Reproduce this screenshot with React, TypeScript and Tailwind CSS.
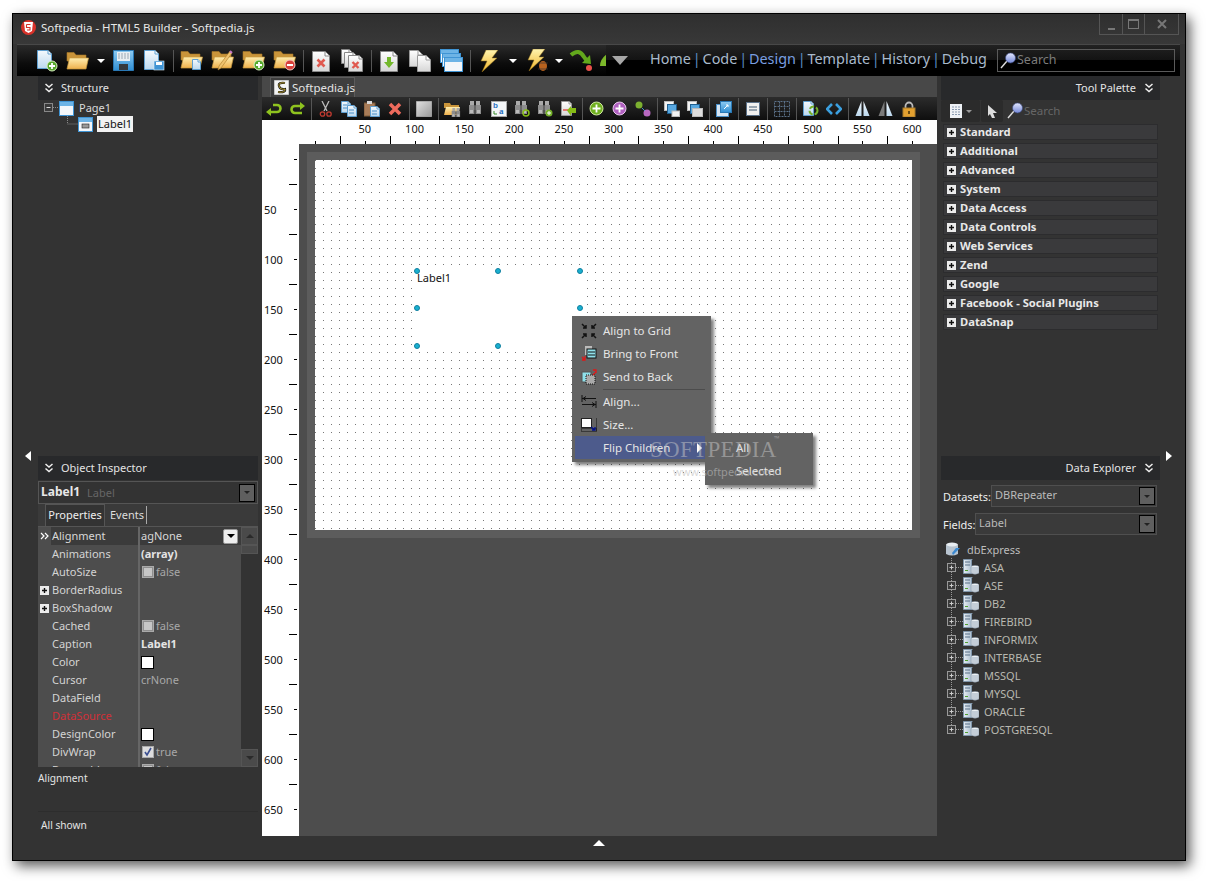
import React from "react";

const S = ({ w = 16, h = 16, children }: { w?: number; h?: number; children: React.ReactNode }) => (
  <svg width={w} height={h} viewBox={`0 0 ${w} ${h}`} className="block shrink-0">
    {children}
  </svg>
);

const Page = ({ x = 0, y = 0, w = 14, h = 18, f = 4, fill = "url(#pg)", stroke = "#5f9fd0" }: any) => (
  <g>
    <path d={`M${x + .5} ${y + .5}H${x + w - f}L${x + w - .5} ${y + f}V${y + h - .5}H${x + .5}Z`} fill={fill} stroke={stroke} />
    <path d={`M${x + w - f} ${y + .5}V${y + f}H${x + w - .5}`} fill="#fff" stroke={stroke} />
  </g>
);
const White = "url(#wh)";
const Folder = () => (
  <g>
    <path d="M1 1.500h7l2 2.500h10v6H1z" fill="#c9943a" stroke="#a87a2a" strokeWidth=".6" />
    <path d="M1 18L3.500 7H22.500L20 18Z" fill="url(#fy)" stroke="#c79a3e" strokeWidth=".7" />
  </g>
);
const Disc = ({ cx, cy, r = 5, fill = "#56a82c", ring = "#d8f0c0" }: any) => (
  <circle cx={cx} cy={cy} r={r} fill={fill} stroke={ring} strokeWidth="1" />
);
const PlusMark = ({ cx, cy, s = 3 }: any) => (
  <path d={`M${cx - s} ${cy}H${cx + s}M${cx} ${cy - s}V${cy + s}`} stroke="#fff" strokeWidth="1.8" />
);
const Cross = ({ cx, cy, s = 3, sw = 2.2, c = "#e05a50" }: any) => (
  <path d={`M${cx - s} ${cy - s}L${cx + s} ${cy + s}M${cx + s} ${cy - s}L${cx - s} ${cy + s}`} stroke={c} strokeWidth={sw} />
);
const Bolt = () => <path d="M7 0H19L13 8H18L3 22L8 11H2Z" fill="url(#bt)" stroke="#8a6a1a" strokeWidth=".5" />;
const Binoc = ({ x = 0, y = 0 }: any) => (
  <g transform={`translate(${x} ${y})`} fill="#8d8d8d">
    <rect x="2" y="0" width="4" height="4" fill="#aaa" />
    <rect x="8" y="0" width="4" height="4" fill="#aaa" />
    <rect x="1" y="4" width="5.5" height="9" />
    <rect x="7.5" y="4" width="5.5" height="9" />
    <rect x="6" y="5" width="2" height="4" fill="#666" />
    <rect x="2" y="9" width="3" height="3" fill="#bbb" />
    <rect x="9" y="9" width="3" height="3" fill="#bbb" />
  </g>
);
const Win = ({ x = 0, y = 0, w = 15, h = 15 }: any) => (
  <g>
    <rect x={x + .5} y={y + .5} width={w - 1} height={h - 1} fill="#f4f7fa" stroke="#3f94d4" />
    <rect x={x + 1} y={y + 1} width={w - 2} height="4" fill="#6db4e6" />
  </g>
);

const Sep = ({ w = "w-[6px]", h = "h-[22px]" }: { w?: string; h?: string }) => (
  <div className={`${w} flex shrink-0 justify-center`}>
    <div className={`${h} w-px bg-[#555]`} />
  </div>
);
const Drop = ({ w }: { w: string }) => (
  <div className={`${w} flex shrink-0 justify-center`}>
    <div className="h-0 w-0 border-x-[4px] border-t-[4px] border-x-transparent border-t-white" />
  </div>
);
const B = ({ children, w = "w-[31px]" }: { children: React.ReactNode; w?: string }) => (
  <div className={`${w} flex shrink-0 items-center justify-center`}>{children}</div>
);
const C = ({ children }: { children: React.ReactNode }) => (
  <div className="flex w-[23px] shrink-0 items-center justify-center">{children}</div>
);

const Magnifier = () => (
  <S w={16} h={17}>
    <path d="M1 16L7 9" stroke="#ddd" strokeWidth="1.4" />
    <circle cx="10.5" cy="6" r="5" fill="url(#mg)" stroke="#3a4a80" strokeWidth=".6" />
  </S>
);

const DoubleChevron = () => (
  <S w={10} h={10}>
    <path d="M1.5 1L5 4L8.5 1M1.5 5.5L5 8.5L8.5 5.5" fill="none" stroke="#eee" strokeWidth="1.5" />
  </S>
);

const Header = ({ title, right }: { title: string; right?: boolean }) => (
  <div className={`flex h-[24px] shrink-0 items-center bg-[#28292b] text-[11px] text-[#e4e4e4] ${right ? "justify-end gap-[8px] pr-[6px]" : "gap-[8px] pl-[6px]"}`}>
    {right ? (
      <>
        <span className="pb-[2px]">{title}</span>
        <DoubleChevron />
      </>
    ) : (
      <>
        <DoubleChevron />
        <span className="-ml-px pb-[2px]">{title}</span>
      </>
    )}
  </div>
);

const ComboBtn = () => (
  <div className="flex h-[18px] w-[16px] items-center justify-center border border-black bg-[#5f5f5f]">
    <div className="h-0 w-0 border-x-[3px] border-t-[3px] border-x-transparent border-t-[#222]" />
  </div>
);

const PlusBox = () => (
  <div className="flex h-[9px] w-[9px] items-center justify-center bg-[#ececec] text-[0px]">
    <S w={7} h={7}>
      <path d="M1 3.5H6M3.5 1V6" stroke="#111" strokeWidth="1.4" />
    </S>
  </div>
);

const Check = ({ on }: { on?: boolean }) => (
  <div className="ml-px flex h-[12px] w-[12px] items-center justify-center border border-[#aaa] bg-[#8f8f8f]">
    {on ? (
      <S w={10} h={10}>
        <rect width="10" height="10" fill="#ddd" />
        <path d="M2 5L4 8L8 1" fill="none" stroke="#3b4f90" strokeWidth="1.6" />
      </S>
    ) : (
      <div className="h-[8px] w-[8px] bg-[#c6c6c6]" />
    )}
  </div>
);

const Swatch = () => <div className="h-[13px] w-[13px] border border-black bg-white" />;

type Row = { n: string; v?: React.ReactNode; plus?: boolean; red?: boolean };
const rows: Row[] = [
  { n: "Animations", v: <b className="pb-[2px] text-[#e4e4e4]">(array)</b> },
  { n: "AutoSize", v: <><Check /><span className="pb-[2px]">false</span></> },
  { n: "BorderRadius", plus: true },
  { n: "BoxShadow", plus: true },
  { n: "Cached", v: <><Check /><span className="pb-[2px]">false</span></> },
  { n: "Caption", v: <b className="pb-[2px] text-[#e4e4e4]">Label1</b> },
  { n: "Color", v: <Swatch /> },
  { n: "Cursor", v: <span className="pb-[2px]">crNone</span> },
  { n: "DataField" },
  { n: "DataSource", red: true },
  { n: "DesignColor", v: <Swatch /> },
  { n: "DivWrap", v: <><Check on /><span className="pb-[2px]">true</span></> },
  { n: "Draggable", v: <><Check /><span className="pb-[2px]">false</span></> },
];

const palette = ["Standard", "Additional", "Advanced", "System", "Data Access", "Data Controls", "Web Services", "Zend", "Google", "Facebook - Social Plugins", "DataSnap"];
const dbs = ["ASA", "ASE", "DB2", "FIREBIRD", "INFORMIX", "INTERBASE", "MSSQL", "MYSQL", "ORACLE", "POSTGRESQL"];

const TreeGlyph = ({ last }: { last?: boolean }) => (
  <S w={16} h={18}>
    {!last && <path d="M4.5 0V18" stroke="#999" strokeDasharray="1 1" />}
    {last && <path d="M4.5 0V9" stroke="#999" strokeDasharray="1 1" />}
    <path d="M9 9.5H16" stroke="#999" strokeDasharray="1 1" />
    <rect x=".5" y="5.5" width="8" height="8" fill="#3a3a3a" stroke="#999" />
    <path d="M2.5 9.5H6.5M4.5 7.5V11.5" stroke="#ccc" />
  </S>
);

const DbIcon = () => (
  <S w={16} h={16}>
    <Page x={0} y={0} w={9} h={15} f={0} fill="url(#db)" stroke="#7f95aa" />
    <path d="M2 3H7M2 6H7" stroke="#5a7088" />
    <rect x="2" y="11" width="3" height="1" fill="#50a030" />
    <ellipse cx="12" cy="8" rx="4" ry="1.6" fill="#eef2f5" stroke="#8a9aaa" strokeWidth=".5" />
    <path d="M8 8V14Q12 16.5 16 14V8" fill="#c4ced8" stroke="#8a9aaa" strokeWidth=".5" />
  </S>
);

const Handle = ({ cls }: { cls: string }) => (
  <div className={`absolute h-[6px] w-[6px] rounded-full border border-[#0f7f9f] bg-[#19b0d0] ${cls}`} />
);

const MenuRow = ({ icon, children, active, arrow }: { icon?: React.ReactNode; children: React.ReactNode; active?: boolean; arrow?: boolean }) => (
  <div className={`flex h-[23px] items-center text-[11.500px] text-[#e6e6e6] ${active ? "bg-[#4d5b8c]" : ""}`}>
    <div className="flex w-[28px] shrink-0 justify-center">{icon}</div>
    <span className="flex-1">{children}</span>
    {arrow && <div className="mr-[3px] h-0 w-0 border-y-[5px] border-l-[5px] border-y-transparent border-l-white" />}
  </div>
);

export default function App() {
  return (
    <div className="h-[881px] w-[1206px] overflow-hidden bg-white pl-[12px] pt-[13px] font-['Noto_Sans','Open_Sans',sans-serif] leading-none">
      <svg className="absolute h-0 w-0">
        <defs>
          <linearGradient id="pg" x1="0" y1="0" x2="0" y2="1"><stop offset="0" stopColor="#f4f9fd" /><stop offset="1" stopColor="#bcd8ee" /></linearGradient>
          <linearGradient id="wh" x1="0" y1="0" x2="0" y2="1"><stop offset="0" stopColor="#ffffff" /><stop offset="1" stopColor="#d6d6d6" /></linearGradient>
          <linearGradient id="fy" x1="0" y1="0" x2="0" y2="1"><stop offset="0" stopColor="#ffeeb0" /><stop offset="1" stopColor="#eeb04c" /></linearGradient>
          <linearGradient id="bt" x1="0" y1="0" x2="0" y2="1"><stop offset="0" stopColor="#fff4b0" /><stop offset="1" stopColor="#f0b428" /></linearGradient>
          <linearGradient id="mg" x1="0" y1="0" x2="0" y2="1"><stop offset="0" stopColor="#e4e8ff" /><stop offset="1" stopColor="#7488d8" /></linearGradient>
          <linearGradient id="db" x1="0" y1="0" x2="1" y2="0"><stop offset="0" stopColor="#e6edf4" /><stop offset="1" stopColor="#a9bccd" /></linearGradient>
          <linearGradient id="bl" x1="0" y1="0" x2="0" y2="1"><stop offset="0" stopColor="#8ecbf2" /><stop offset="1" stopColor="#2f8ed2" /></linearGradient>
          <linearGradient id="gy" x1="0" y1="0" x2="1" y2="1"><stop offset="0" stopColor="#e0e0e0" /><stop offset="1" stopColor="#9a9a9a" /></linearGradient>
        </defs>
      </svg>

      {/* window */}
      <div className="flex h-[848px] w-[1174px] flex-col border border-black bg-[#333] shadow-[4px_5px_12px_rgba(0,0,0,0.65)]">
        {/* title bar */}
        <div className="flex h-[30px] shrink-0 items-start bg-[linear-gradient(#2f2f2f,#383838)]">
          <div className="mt-[6px] flex items-center gap-[5px] pl-[8px]">
            <div className="flex h-[15px] w-[15px] items-center justify-center rounded-full bg-[#d8322a]">
              <S w={9} h={11}>
                <path d="M0 0H9L8 9L4.500 11L1 9Z" fill="#fff" />
                <path d="M2.500 2.500H6.500M2.500 2.500V5.500H6V8L3 8" fill="none" stroke="#d8322a" strokeWidth="1.1" />
              </S>
            </div>
            <span className="text-[11.500px] text-[#e8e8e8]">Softpedia - HTML5 Builder - Softpedia.js</span>
          </div>
          <div className="ml-auto mr-[6px] flex h-[21px] border border-t-0 border-[#555]">
            <div className="flex w-[23px] items-end justify-center border-r border-[#555] pb-[4px]"><div className="h-[2px] w-[7px] bg-[#777]" /></div>
            <div className="flex w-[22px] items-center justify-center border-r border-[#555]"><div className="h-[10px] w-[11px] border border-t-2 border-[#777]" /></div>
            <div className="flex w-[33px] items-center justify-center">
              <S w={10} h={10}><Cross cx={5} cy={5} s={4} sw={2} c="#777" /></S>
            </div>
          </div>
        </div>

        {/* main toolbar */}
        <div className="ml-[4px] mr-[5px] flex h-[32px] shrink-0 items-center border-t border-[#484848] bg-[linear-gradient(#2a2a2a,#0c0c0c_60%,#000)]">
          <div className="w-[14px] shrink-0" />
          <B><S w={22} h={22}><Page x={1} y={0} w={15} h={19} /><Disc cx={16} cy={16} /><PlusMark cx={16} cy={16} /></S></B>
          <B><S w={23} h={19}><Folder /></S></B>
          <Drop w="w-[15px]" />
          <B>
            <S w={21} h={21}>
              <path d="M.5 .5H20.500V20.500H.5Z" fill="url(#bl)" stroke="#2a78b4" />
              <rect x="4" y="2" width="13" height="9" fill="#e9eef2" />
              <path d="M5 4H16M5 6H16M5 8H16" stroke="#9aa8b4" strokeDasharray="2 1" />
              <rect x="6" y="14" width="9" height="6" fill="#36393c" />
            </S>
          </B>
          <B>
            <S w={21} h={21}><Page x={0} y={0} w={15} h={20} /><rect x="10" y="11" width="10" height="9" fill="#3f94d4" stroke="#dbeaf5" strokeWidth=".6" /><rect x="12" y="12" width="6" height="3" fill="#fff" /></S>
          </B>
          <Sep />
          <B><S w={23} h={21}><Folder /><Page x={12} y={9} w={9} h={11} f={3} /></S></B>
          <B><S w={23} h={21}><Folder /><path d="M21 3L10 18L7 20L8 16L19 1Z" fill="#efc26e" stroke="#a87a2a" strokeWidth=".6" /><path d="M19 1L21 3" stroke="#c878c8" strokeWidth="2" /></S></B>
          <B><S w={23} h={21}><Folder /><Disc cx={17} cy={15} /><PlusMark cx={17} cy={15} /></S></B>
          <B><S w={23} h={21}><Folder /><Disc cx={17} cy={15} fill="#d8403a" ring="#f5c8c4" /><path d="M14 15H20" stroke="#fff" strokeWidth="2" /></S></B>
          <Sep />
          <B><S w={19} h={22}><Page x={0} y={1} w={18} h={21} f={5} fill={White} stroke="#888" /><Cross cx={9} cy={13} s={3.5} sw={2.6} /></S></B>
          <B><S w={23} h={23}><Page x={0} y={0} w={12} h={15} fill={White} stroke="#888" /><Page x={3} y={3} w={13} h={16} fill={White} stroke="#888" /><Page x={7} y={6} w={15} h={17} fill={White} stroke="#888" /><Cross cx={14.5} cy={16} s={3} sw={2.4} /></S></B>
          <Sep />
          <B><S w={19} h={22}><Page x={0} y={1} w={18} h={21} f={5} fill={White} stroke="#888" /><path d="M7 7H11V12H14L9 18L4 12H7Z" fill="#74b82c" /></S></B>
          <B><S w={23} h={22}><Page x={0} y={0} w={14} h={17} f={5} fill={White} stroke="#999" /><Page x={8} y={5} w={14} h={17} f={5} fill={White} stroke="#999" /></S></B>
          <B><S w={23} h={23}><Win x={0} y={0} w={19} h={14} /><Win x={2} y={4} w={19} h={14} /><Win x={4} y={8} w={19} h={15} /></S></B>
          <Sep />
          <B><S w={20} h={22}><Bolt /></S></B>
          <Drop w="w-[18px]" />
          <B><S w={23} h={23}><Bolt /><ellipse cx="17" cy="17" rx="4" ry="5" fill="#b8621e" /><path d="M12 14L22 14M12 20L22 20" stroke="#333" strokeWidth=".7" /></S></B>
          <Drop w="w-[12px]" />
          <B><S w={24} h={23}><path d="M2 6Q10 -1 15 8L18 12" fill="none" stroke="#62a81c" strokeWidth="4" /><path d="M13 14L22 15L21 6Z" fill="#62a81c" /><circle cx="20" cy="19" r="3" fill="#e8504a" /></S></B>
          <div className="w-[4px] shrink-0" />
          <div className="w-[6px] shrink-0 self-stretch overflow-hidden pt-[9px]"><S w={10} h={12}><path d="M0 12Q0 5 7 0V12Z" fill="#7cb82a" /></S></div>

          {/* nav */}
          <div className="flex h-full flex-1 items-center bg-[linear-gradient(#222_0%,#131313_48%,#000_49%)]">
            <div className="ml-[6px] h-0 w-0 border-x-[8px] border-t-[9px] border-x-transparent border-t-[#a8a8a8]" />
            <div className="ml-[22px] flex w-[337px] items-center justify-between whitespace-nowrap pb-[2px] text-[14.400px] text-[#a9bacc]">
              <span>Home</span><span className="text-[#5b8cc4]">|</span>
              <span>Code</span><span className="text-[#5b8cc4]">|</span>
              <span className="text-[#7a9fe0]">Design</span><span className="text-[#5b8cc4]">|</span>
              <span>Template</span><span className="text-[#5b8cc4]">|</span>
              <span>History</span><span className="text-[#5b8cc4]">|</span>
              <span>Debug</span>
            </div>
            <div className="ml-[10px] flex h-[23px] w-[178px] items-center gap-[1px] border border-[#5a5a5a] pl-[2px] text-[12.500px] text-[#7c7c7c]">
              <Magnifier />
              <span>Search</span>
            </div>
          </div>
        </div>

        {/* body */}
        <div className="flex min-h-0 flex-1">
          {/* left strip */}
          <div className="w-[25px] shrink-0 pl-[12px] pt-[375px]">
            <div className="h-0 w-0 border-y-[5px] border-r-[6px] border-y-transparent border-r-white" />
          </div>

          {/* left column */}
          <div className="flex w-[220px] shrink-0 flex-col text-[11px]">
            <div className="flex h-[380px] flex-col">
              <Header title="Structure" />
              <div className="pl-[6px] text-[#dcdcdc]">
                <div className="flex h-[16px] items-center">
                  <S w={15} h={16}>
                    <rect x=".5" y="3.500" width="8" height="8" fill="#3a3a3a" stroke="#888" />
                    <path d="M2.500 7.500H6.500" stroke="#ddd" />
                    <path d="M9 7.500H15" stroke="#888" strokeDasharray="1 1" />
                  </S>
                  <S w={16} h={15}><Win w={15} h={15} /></S>
                  <span className="ml-[4px] pb-[1px]">Page1</span>
                </div>
                <div className="flex h-[16px] items-center">
                  <div className="w-[34px] shrink-0 pl-[23px]">
                    <S w={11} h={16}><path d="M.5 0V8H11" fill="none" stroke="#888" strokeDasharray="1 1" /></S>
                  </div>
                  <S w={16} h={15}><Win w={15} h={15} /><rect x="4" y="7" width="7" height="4" fill="#999" stroke="#222" strokeWidth=".6" /></S>
                  <span className="ml-[3px] flex h-[16px] items-center bg-[#f2f2f2] px-[1px] pb-[1px] text-[#111]">Label1</span>
                </div>
              </div>
            </div>

            {/* object inspector */}
            <Header title="Object Inspector" />
            <div className="mt-px flex h-[23px] shrink-0 items-center border border-[#555] bg-[#333] pl-[2px] pr-[2px]">
              <b className="pb-[1px] text-[12px] text-[#e8e8e8]">Label1</b>
              <span className="ml-[7px] pb-[1px] text-[#666]">Label</span>
              <div className="ml-auto"><ComboBtn /></div>
            </div>
            <div className="flex h-[23px] shrink-0 items-end border-b border-[#555] bg-[#3a3a3a] pl-[7px]">
              <div className="flex h-[22px] w-[60px] items-center justify-center border border-b-0 border-[#555] bg-[#333] pb-[2px] text-[#eee]">Properties</div>
              <div className="mb-[2px] flex h-[18px] items-center border-r border-[#aaa] pb-[1px] pl-[5px] pr-[2px] text-[#ddd]">Events</div>
            </div>
            <div className="flex h-[240px] shrink-0 overflow-hidden bg-[#4d4d4d]">
              <div className="w-[203px] shrink-0">
                <div className="flex h-[18px]">
                  <div className="flex w-[13px] shrink-0 items-center justify-center">
                    <S w={9} h={8}><path d="M1 1L4 4L1 7M5 1L8 4L5 7" fill="none" stroke="#fff" strokeWidth="1.2" /></S>
                  </div>
                  <div className="flex w-[87px] shrink-0 items-center bg-[#3b3b3b] pb-[2px] pl-px text-[#d8d8d8]">Alignment</div>
                  <div className="w-[2px] shrink-0 bg-[#666]" />
                  <div className="flex flex-1 items-center bg-[#3b3b3b] pl-[1px] text-[#d8d8d8]">
                    <span className="pb-[2px]">agNone</span>
                    <div className="ml-auto mr-[3px] flex h-[15px] w-[15px] items-center justify-center rounded-[2px] border border-[#999] bg-[#eee]">
                      <div className="h-0 w-0 border-x-[4px] border-t-[4px] border-x-transparent border-t-black" />
                    </div>
                  </div>
                </div>
                {rows.map((r) => (
                  <div key={r.n} className="flex h-[18px]">
                    <div className="flex w-[13px] shrink-0 items-center justify-center">{r.plus && <PlusBox />}</div>
                    <div className={`flex w-[87px] shrink-0 items-center pb-[2px] pl-px ${r.red ? "text-[#d03038]" : "text-[#d4d4d4]"}`}>{r.n}</div>
                    <div className="w-[2px] shrink-0 bg-[#666]" />
                    <div className="flex flex-1 items-center gap-[2px] pl-[1px] text-[#a8a8a8]">{r.v}</div>
                  </div>
                ))}
              </div>
              <div className="flex w-[17px] shrink-0 flex-col bg-[#333]">
                <div className="flex h-[18px] items-center justify-center border border-[#555] bg-[#4a4a4a]">
                  <div className="h-0 w-0 border-x-[4px] border-b-[4px] border-x-transparent border-b-[#2a2a2a]" />
                </div>
                <div className="h-[9px] border border-[#555] bg-[#4a4a4a]" />
                <div className="flex-1" />
                <div className="flex h-[18px] items-center justify-center border border-[#555] bg-[#4a4a4a]">
                  <div className="h-0 w-0 border-x-[4px] border-t-[4px] border-x-transparent border-t-[#2a2a2a]" />
                </div>
              </div>
            </div>
            <div className="h-[45px] shrink-0 border-b border-[#2d2d2d] pt-[6px] text-[10.200px] text-[#e4e4e4]">Alignment</div>
            <div className="pl-[3px] pt-[8px] text-[10.200px] text-[#e4e4e4]">All shown</div>
          </div>

          <div className="w-[4px] shrink-0" />

          {/* center */}
          <div className="flex w-[675px] shrink-0 flex-col">
            <div className="flex h-[21px] shrink-0 items-end bg-[#484848] pl-[8px]">
              <div className="flex h-[20px] w-[85px] items-center gap-[3px] border border-b-0 border-[#5c5c5c] bg-[#3e3e3e] pl-[3px] text-[11.500px] text-[#e4e4e4]">
                <S w={15} h={15}>
                  <rect width="15" height="15" fill="#f4f4f4" stroke="#999" />
                  <path d="M11 3Q4 2 5 6T11 9Q12 13 4 12" fill="none" stroke="#111" strokeWidth="2.200" />
                  <path d="M11 3Q4 2 5 6T11 9Q12 13 4 12" fill="none" stroke="#e8c840" strokeWidth=".8" />
                </S>
                <span>Softpedia.js</span>
              </div>
            </div>
            <div className="flex h-[23px] shrink-0 items-center bg-[linear-gradient(#2c2c2c,#0e0e0e)]">
              <C><S w={16} h={14}><path d="M7 3H11a3.500 3.500 0 0 1 0 7H4" fill="none" stroke="#8fc31f" strokeWidth="2.600" /><path d="M0 10L5 6V14Z" fill="#8fc31f" /></S></C>
              <C><S w={16} h={14}><path d="M11 4H6a3.500 3.500 0 0 0 0 7H13" fill="none" stroke="#8fc31f" strokeWidth="2.600" /><path d="M16 4L11 0V8Z" fill="#8fc31f" /></S></C>
              <Sep />
              <C><S w={14} h={16}><path d="M3 0L8 10M10 0L5 10" stroke="#bbb" strokeWidth="1.300" /><circle cx="3.500" cy="13" r="2.200" fill="none" stroke="#c03a30" strokeWidth="1.300" /><circle cx="10" cy="13" r="2.200" fill="none" stroke="#c03a30" strokeWidth="1.300" /></S></C>
              <C><S w={16} h={16}><Page x={0} y={0} w={10} h={12} f={3} /><path d="M2 4H7M2 7H7" stroke="#4a90c8" /><Page x={6} y={4} w={10} h={12} f={3} /><path d="M8 9H13M8 12H13" stroke="#4a90c8" /></S></C>
              <C><S w={16} h={16}><rect x="0" y="2" width="11" height="13" fill="#a87c58" stroke="#7a5a3a" /><rect x="3" y="0" width="5" height="3" fill="#d8d8d8" /><Page x={6} y={5} w={10} h={11} f={3} /><path d="M8 10H13M8 13H13" stroke="#4a90c8" /></S></C>
              <C><S w={14} h={14}><Cross cx={7} cy={7} s={5} sw={3.500} c="#ee6a5c" /></S></C>
              <Sep />
              <C><S w={16} h={16}><rect x=".5" y=".5" width="15" height="15" fill="url(#gy)" stroke="#ddd" strokeDasharray="1 1" /></S></C>
              <Sep />
              <C><S w={17} h={16}><path d="M0 2h6l1 2h8v3H0z" fill="#c9943a" /><path d="M0 14L2 6H16L14 14Z" fill="url(#fy)" /><g transform="translate(7 7) scale(.7)"><Binoc /></g></S></C>
              <C><S w={15} h={15}><Binoc /></S></C>
              <C>
                <S w={16} h={16}>
                  <rect x=".5" y=".5" width="15" height="15" fill="#f4f6f8" stroke="#aaa" />
                  <text x="2" y="7" fontSize="8" fontWeight="700" fill="#2a70c0" fontFamily="'Liberation Sans',sans-serif">b</text>
                  <text x="8" y="13" fontSize="9" fontWeight="700" fill="#2a70c0" fontFamily="'Liberation Serif',serif">a</text>
                  <path d="M3 10V13H6" fill="none" stroke="#3a8a2a" />
                </S>
              </C>
              <C><S w={16} h={16}><Binoc /><circle cx="12" cy="12" r="3" fill="none" stroke="#86bc16" strokeWidth="1.500" /></S></C>
              <C><S w={16} h={16}><Binoc /><circle cx="12" cy="12" r="3.500" fill="#74b02a" /><path d="M10 12H14M12 10V14" stroke="#fff" /></S></C>
              <C><S w={16} h={16}><Page x={1} y={0} w={11} h={15} f={3} fill={White} stroke="#999" /><path d="M3 9H8" stroke="#e05a50" strokeWidth="1.500" /><path d="M16 7V12H11V15L7 9.500L11 5V7Z" fill="#86bc16" /></S></C>
              <Sep />
              <C><S w={15} h={15}><Disc cx={7.5} cy={7.5} r={6.5} fill="#70b020" ring="#cfe8a0" /><PlusMark cx={7.5} cy={7.5} s={4} /></S></C>
              <C><S w={15} h={15}><Disc cx={7.5} cy={7.5} r={6.5} fill="#b060c0" ring="#e8c8ec" /><PlusMark cx={7.5} cy={7.5} s={4} /></S></C>
              <C><S w={16} h={16}><circle cx="4" cy="4" r="3.500" fill="#7cb030" /><circle cx="12" cy="12" r="3.500" fill="#b868c0" /><path d="M7 7L10 10" stroke="#4a90c8" /></S></C>
              <Sep />
              <C><S w={16} h={16}><rect x=".5" y=".5" width="9" height="9" fill="#f4f4f4" stroke="#bbb" /><rect x="3.500" y="3.500" width="9" height="9" fill="#58a8e0" stroke="#1f5f90" /><rect x="8" y="10" width="7.500" height="5.500" fill="#f2f2f2" stroke="#bbb" /></S></C>
              <C><S w={16} h={16}><rect x=".5" y=".5" width="9" height="9" fill="#f4f4f4" stroke="#bbb" /><rect x="3.500" y="3.500" width="9" height="9" fill="#58a8e0" stroke="#1f5f90" /><rect x="5.500" y="7.500" width="10" height="8" fill="#ddd" stroke="#bbb" /></S></C>
              <Sep />
              <C><S w={16} h={16}><rect x=".5" y="3.500" width="12" height="12" fill="#d6e6f4" stroke="#4a90c8" /><rect x="4.500" y=".5" width="11" height="11" fill="url(#bl)" stroke="#2a78b4" /><path d="M8 8L12 4M10 4H12V6" stroke="#fff" fill="none" /></S></C>
              <Sep />
              <C><S w={16} h={16}><rect x="1.500" y="1.500" width="13" height="13" fill="#f0f0f0" stroke="#5a7088" /><path d="M4 6H12M4 9H12" stroke="#7a8a9a" strokeWidth="1.300" /></S></C>
              <Sep />
              <C><S w={16} h={16}><path d="M.5 .5H15.500V15.500H.5ZM.5 5.500H15.500M.5 10.500H15.500M5.500 .5V15.500M10.500 .5V15.500" fill="none" stroke="#5a7088" strokeDasharray="2 1" /></S></C>
              <Sep />
              <C><S w={16} h={16}><Page x={0} y={0} w={11} h={15} f={3} /><circle cx="10.500" cy="9.500" r="4" fill="none" stroke="#74b02a" strokeWidth="2" strokeDasharray="5 2" /></S></C>
              <C><S w={16} h={12}><path d="M6 1L1 6L6 11M10 1L15 6L10 11" fill="none" stroke="#3ba0e0" strokeWidth="2.600" /></S></C>
              <Sep />
              <C><S w={15} h={16}><path d="M6.500 0V15H.5ZM8.500 0V15H14.500Z" fill="url(#pg)" /></S></C>
              <C><S w={15} h={16}><path d="M6.500 0V15H.5Z" fill="#7a7a7a" /><path d="M8.500 0V15H14.500Z" fill="url(#pg)" /></S></C>
              <C><S w={14} h={16}><path d="M3.500 8V5a3.500 3.500 0 0 1 7 0V8" fill="none" stroke="#bbb" strokeWidth="1.800" /><rect x="1" y="7" width="12" height="9" fill="#e2a030" stroke="#a87a2a" /><rect x="6" y="10" width="2" height="3" fill="#6a4a10" /></S></C>
            </div>

            {/* top ruler */}
            <div className="flex h-[24px] shrink-0 items-end bg-white pl-[53px] text-[11px] text-[#111]">
              <div className="h-[3px] w-px bg-black" />
              <div className="w-[24px]" />
              {[50, 100, 150, 200, 250, 300, 350, 400, 450, 500, 550, 600].map((n) => (
                <div key={n} className="flex h-full w-[50px] flex-col items-center justify-between">
                  <span className="pt-[3px]">{n}</span>
                  <div className="flex h-[8px] w-full items-end justify-center border-l border-black">
                    <div className="h-[3px] w-px bg-black" />
                  </div>
                </div>
              ))}
            </div>

            <div className="flex min-h-0 flex-1">
              {/* left ruler */}
              <div className="w-[37px] shrink-0 bg-white pt-[40px] text-[11px] text-[#111]">
                <div className="-mt-[25px] mb-[24px] ml-[32px] h-px w-[3px] bg-black" />
                {[50, 100, 150, 200, 250, 300, 350, 400, 450, 500, 550, 600, 650].map((n) => (
                  <div key={n} className="flex h-[50px] items-center justify-between bg-[linear-gradient(#000,#000)] bg-[size:8px_1px] bg-[position:right_2px_top] bg-no-repeat pl-[2px] pr-[2px]">
                    <span>{n}</span>
                    <div className="h-px w-[3px] bg-black" />
                  </div>
                ))}
              </div>

              {/* canvas */}
              <div className="min-w-0 flex-1 bg-[#4d4d4d] pl-[8px] pt-[8px]">
                <div className="h-[386px] w-[613px] bg-[#5c5c5c] p-[8px]">
                  <div className="relative h-[370px] w-[597px] bg-[#777] bg-[linear-gradient(to_right,transparent_1px,#fff_1px),linear-gradient(transparent_1px,#fff_1px)] bg-[size:8px_8px]">
                    <div className="absolute left-[102px] top-[111px] h-[75px] w-[163px] bg-white pt-[1px] text-[11px] text-[#111]">Label1</div>
                    <Handle cls="left-[99px] top-[108px]" />
                    <Handle cls="left-[180px] top-[108px]" />
                    <Handle cls="left-[262px] top-[108px]" />
                    <Handle cls="left-[99px] top-[145px]" />
                    <Handle cls="left-[262px] top-[145px]" />
                    <Handle cls="left-[99px] top-[183px]" />
                    <Handle cls="left-[180px] top-[183px]" />

                    {/* context menu */}
                    <div className="absolute left-[257px] top-[156px] h-[146px] w-[139px] bg-[#636363] py-[3px] pl-[3px] pr-[6px] shadow-[3px_3px_3px_rgba(0,0,0,0.5)]">
                      <MenuRow icon={<S w={16} h={16}><path d="M1 1L5 5M5 2V5H2M15 1L11 5M14 5H11V2M1 15L5 11M2 11H5V14M15 15L11 11M11 14V11H14" fill="none" stroke="#111" strokeWidth="1.500" /></S>}>Align to Grid</MenuRow>
                      <MenuRow icon={<S w={16} h={16}><rect x="4" y="0" width="7" height="9" fill="#bbb" /><rect x="6" y="3" width="9" height="9" fill="#8fe0ea" stroke="#111" /><path d="M7 6H14M7 9H14" stroke="#111" /><path d="M4 10V14H1M1 11L4 14" fill="none" stroke="#e01818" strokeWidth="1.300" /></S>}>Bring to Front</MenuRow>
                      <MenuRow icon={<S w={16} h={16}><rect x="1" y="3" width="9" height="10" fill="#8fe0ea" stroke="#555" /><rect x="5" y="6" width="9" height="9" fill="#aaa" stroke="#111" strokeDasharray="1 1" /><path d="M12 6L15 3M12 1H15V4" fill="none" stroke="#e01818" strokeWidth="1.300" /></S>}>Send to Back</MenuRow>
                      <div className="ml-[28px] h-[2px] border-b border-[#4c4c4c]" />
                      <MenuRow icon={<S w={16} h={13}><path d="M1 0V7M1 3.500H15M15 6V13M1 9.500H15" stroke="#111" /><path d="M5 1.500L2 3.500L5 5.500M11 7.500L14 9.500L11 11.500" fill="none" stroke="#111" /></S>}>Align...</MenuRow>
                      <MenuRow icon={<S w={16} h={14}><rect x=".5" y=".5" width="10" height="9" fill="#fff" stroke="#222" /><rect x=".5" y="10.500" width="15" height="3" fill="none" stroke="#111" strokeDasharray="1 1" /><path d="M15.500 .5V13" stroke="#111" strokeDasharray="1 1" /><path d="M10 9L14 12M14 9V12H11" fill="none" stroke="#00108a" strokeWidth="1.300" /></S>}>Size...</MenuRow>
                      <MenuRow active arrow>Flip Children</MenuRow>
                    </div>
                    <div className="absolute left-[390px] top-[273px] h-[52px] w-[108px] bg-[#636363] py-[3px] pl-[3px] shadow-[3px_3px_3px_rgba(0,0,0,0.5)]">
                      <MenuRow>All</MenuRow>
                      <MenuRow>Selected</MenuRow>
                    </div>

                    {/* watermark */}
                    <div className="absolute left-[335px] top-[278px] font-['Liberation_Serif',serif] text-[23px] tracking-[0.3px] text-[#c8c8c8]/50">SOFTPEDIA</div>
                    <div className="absolute left-[459px] top-[275px] text-[7px] text-[#c8c8c8]/50">™</div>
                    <div className="absolute left-[358px] top-[306px] text-[11px] text-[#bebebe]/60">www.softpedia.com</div>
                  </div>
                </div>
              </div>
            </div>

            {/* bottom strip */}
            <div className="flex h-[24px] shrink-0 justify-center pr-[1px] pt-[4px]">
              <div className="h-0 w-0 border-x-[6px] border-b-[6px] border-x-transparent border-b-white" />
            </div>
          </div>

          <div className="w-[4px] shrink-0" />

          {/* right column */}
          <div className="flex w-[219px] shrink-0 flex-col text-[11px]">
            <div className="flex h-[380px] flex-col">
              <Header title="Tool Palette" right />
              <div className="flex h-[24px] shrink-0 items-start text-[11.500px] text-[#666]">
                <div className="flex h-[22px] w-[39px] items-center justify-center gap-[4px] rounded-[2px] bg-[#2b2b2b]">
                  <S w={12} h={14}><rect width="12" height="14" fill="#eef1f5" /><path d="M2 3H10M2 5.500H10M2 8H10M2 10.500H10" stroke="#8a9ab0" strokeDasharray="2 1" /></S>
                  <div className="h-0 w-0 border-x-[3px] border-t-[3px] border-x-transparent border-t-[#999]" />
                </div>
                <div className="ml-px flex h-[22px] w-[22px] items-center justify-center rounded-[2px] bg-[#2b2b2b]">
                  <S w={11} h={14}><path d="M1 1L10 9H6L8 14H5L3 10L1 12Z" fill="#ddd" /></S>
                </div>
                <div className="ml-[4px] mt-[2px]"><Magnifier /></div>
                <span className="ml-[1px] mt-[5px]">Search</span>
              </div>
              <div className="flex flex-col gap-[3px] pl-[2px] pr-[2px]">
                {palette.map((p) => (
                  <div key={p} className="flex h-[16px] items-center border border-[#2c2c2e] bg-[#3a3a3c] pl-[3px] font-bold text-[#e8e8e8]">
                    <PlusBox />
                    <span className="ml-[4px] text-[11.200px]">{p}</span>
                  </div>
                ))}
              </div>
            </div>

            <Header title="Data Explorer" right />
            <div className="flex h-[28px] items-center pl-[2px] pt-[4px] text-[#eee]">
              <span className="w-[48px]">Datasets:</span>
              <div className="flex h-[22px] w-[166px] items-center justify-between border border-[#4f4f4f] bg-[#3a3a3a] pl-[3px] text-[#bbb]"><span className="pb-[3px]">DBRepeater</span><div className="mr-[1px]"><ComboBtn /></div></div>
            </div>
            <div className="flex h-[28px] items-center pl-[2px] pt-[4px] text-[#eee]">
              <span className="w-[32px]">Fields:</span>
              <div className="flex h-[22px] w-[182px] items-center justify-between border border-[#4f4f4f] bg-[#3a3a3a] pl-[3px] text-[#bbb]"><span className="pb-[3px]">Label</span><div className="mr-[1px]"><ComboBtn /></div></div>
            </div>
            <div className="pl-[4px] pt-[4px] text-[#bcbcbc]">
              <div className="flex h-[18px] items-center gap-[6px]">
                <S w={16} h={15}><ellipse cx="7" cy="3" rx="6" ry="2.500" fill="#e8edf2" /><path d="M1 3V12Q7 15 13 12V3Q7 6 1 3Z" fill="#b8c4d0" /><path d="M8 13L15 6L11 6L7 11Z" fill="#3a88d0" /></S>
                <span>dbExpress</span>
              </div>
              {dbs.map((d, i) => (
                <div key={d} className="flex h-[18px] items-center pl-[2px]">
                  <TreeGlyph last={i === dbs.length - 1} />
                  <DbIcon />
                  <span className="ml-[5px] text-[#b8b8b0]">{d}</span>
                </div>
              ))}
            </div>
          </div>

          {/* right strip */}
          <div className="w-[25px] shrink-0 pl-[6px] pt-[375px]">
            <div className="h-0 w-0 border-y-[5px] border-l-[6px] border-y-transparent border-l-white" />
          </div>
        </div>
      </div>
    </div>
  );
}
